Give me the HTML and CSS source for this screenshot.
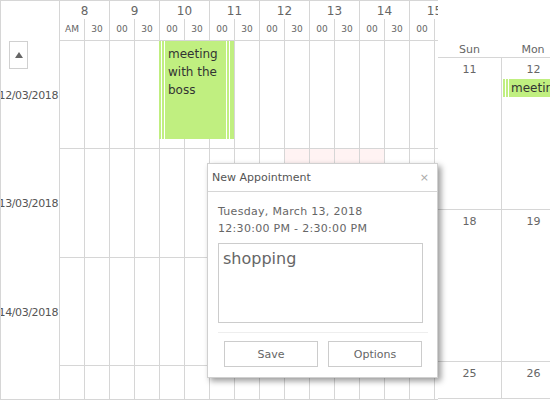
FILE: index.html
```html
<!DOCTYPE html>
<html>
<head>
<meta charset="utf-8">
<link rel="stylesheet" href="styles.css">
</head>
<body>
<div class="app">
  <div class="timeline">
    <div class="tl-grid">
      <div class="corner"></div>
      <div class="hour">8</div><div class="hour">9</div><div class="hour">10</div><div class="hour">11</div>
      <div class="hour">12</div><div class="hour">13</div><div class="hour">14</div><div class="hour">15</div>
      <div class="min">AM</div><div class="min">30</div><div class="min">00</div><div class="min">30</div>
      <div class="min">00</div><div class="min">30</div><div class="min">00</div><div class="min">30</div>
      <div class="min">00</div><div class="min">30</div><div class="min">00</div><div class="min">30</div>
      <div class="min">00</div><div class="min">30</div><div class="min">00</div><div class="min"></div>

      <div class="label"><span>12/03/2018</span></div>
      <div class="cell"></div><div class="cell"></div><div class="cell"></div><div class="cell"></div>
      <div class="cell"></div><div class="cell"></div><div class="cell"></div><div class="cell"></div>
      <div class="cell"></div><div class="cell"></div><div class="cell"></div><div class="cell"></div>
      <div class="cell"></div><div class="cell"></div><div class="cell"></div><div class="cell"></div>

      <div class="label"><span>13/03/2018</span></div>
      <div class="cell"></div><div class="cell"></div><div class="cell"></div><div class="cell"></div>
      <div class="cell"></div><div class="cell"></div><div class="cell"></div><div class="cell"></div>
      <div class="cell"></div><div class="cell sel"></div><div class="cell sel"></div><div class="cell sel"></div>
      <div class="cell sel"></div><div class="cell"></div><div class="cell"></div><div class="cell"></div>

      <div class="label"><span>14/03/2018</span></div>
      <div class="cell"></div><div class="cell"></div><div class="cell"></div><div class="cell"></div>
      <div class="cell"></div><div class="cell"></div><div class="cell"></div><div class="cell"></div>
      <div class="cell"></div><div class="cell"></div><div class="cell"></div><div class="cell"></div>
      <div class="cell"></div><div class="cell"></div><div class="cell"></div><div class="cell"></div>

      <div class="label"></div>
      <div class="cell end"></div><div class="cell end"></div><div class="cell end"></div><div class="cell end"></div>
      <div class="cell end"></div><div class="cell end"></div><div class="cell end"></div><div class="cell end"></div>
      <div class="cell end"></div><div class="cell end"></div><div class="cell end"></div><div class="cell end"></div>
      <div class="cell end"></div><div class="cell end"></div><div class="cell end"></div><div class="cell end"></div>
    </div>
    <div class="up-btn"><span class="tri"></span></div>
    <div class="appt">meeting with the boss</div>
  </div>

  <div class="month">
    <div class="dow-row"><div class="dow">Sun</div><div class="dow">Mon</div></div>
    <div class="week">
      <div class="day"><div class="num">11</div></div>
      <div class="day"><div class="num">12</div><div class="bar">meeting</div></div>
    </div>
    <div class="week">
      <div class="day"><div class="num">18</div></div>
      <div class="day"><div class="num">19</div></div>
    </div>
    <div class="week last">
      <div class="day"><div class="num">25</div></div>
      <div class="day"><div class="num">26</div></div>
    </div>
  </div>

  <div class="dialog">
    <div class="dlg-head"><span class="dlg-title">New Appointment</span><span class="close">×</span></div>
    <div class="dlg-body">
      <div class="when">Tuesday, March 13, 2018</div>
      <div class="when">12:30:00 PM - 2:30:00 PM</div>
      <div class="note">shopping</div>
      <div class="dlg-foot"><button class="btn">Save</button><button class="btn">Options</button></div>
    </div>
  </div>
</div>
</body>
</html>
```

FILE: styles.css
```css
* { box-sizing: border-box; }

body {
  margin: 0;
  background: #fff;
  color: #666;
  font-family: "DejaVu Sans", Verdana, sans-serif;
}

.app {
  position: relative;
  width: 550px;
  height: 400px;
  display: flex;
  overflow: hidden;
}

/* ---------- timeline ---------- */
.timeline {
  position: relative;
  flex: none;
  width: 438px;
  height: 400px;
  overflow: hidden;
  border-top: 1px solid #d6d6d6;
  border-bottom: 1px solid #d6d6d6;
}

.tl-grid {
  display: grid;
  grid-template-columns: 59px repeat(16, 25px);
  grid-template-rows: 18px 22px 108px 109px 108px 33px;
  width: 459px;
}

.corner {
  grid-row: span 2;
  border-left: 1px solid #d6d6d6;
}

.hour {
  grid-column: span 2;
  border-left: 1px solid #d6d6d6;
  text-align: center;
  font-size: 12px;
  line-height: 20px;
  color: #666;
  white-space: nowrap;
}

.min {
  border-left: 1px solid #d6d6d6;
  border-bottom: 1px solid #d6d6d6;
  text-align: center;
  font-size: 9px;
  line-height: 20px;
  color: #666;
}

.label {
  border-left: 1px solid #d6d6d6;
  display: flex;
  align-items: center;
  justify-content: flex-end;
  overflow: hidden;
  white-space: nowrap;
  font-size: 11px;
  letter-spacing: -0.4px;
  color: #555;
  padding-right: 1px;
}

.cell {
  border-left: 1px solid #d6d6d6;
  border-bottom: 1px solid #d6d6d6;
}
.cell.end { border-bottom: none; }
.cell.sel { background: #fff3f3; }

.up-btn {
  position: absolute;
  left: 9px;
  top: 40px;
  width: 19px;
  height: 28px;
  border: 1px solid #d0d0d0;
  display: flex;
  align-items: center;
  justify-content: center;
}
.tri {
  width: 0;
  height: 0;
  border-left: 4px solid transparent;
  border-right: 4px solid transparent;
  border-bottom: 6px solid #666;
}

.appt {
  position: absolute;
  left: 159px;
  top: 40px;
  width: 75px;
  height: 98px;
  padding: 4px 6px 0 9px;
  font-size: 12px;
  line-height: 18px;
  color: #333;
  background:
    linear-gradient(to right,
      transparent 0 2px, #fff 2px 3px, transparent 3px 5px, #fff 5px 6px,
      transparent 6px calc(100% - 8px), #fff calc(100% - 8px) calc(100% - 7px),
      transparent calc(100% - 7px) calc(100% - 5px), #fff calc(100% - 5px) calc(100% - 4px),
      transparent calc(100% - 4px)),
    #c0ef80;
}

/* ---------- month ---------- */
.month {
  flex: 1;
  display: flex;
  flex-direction: column;
  padding-top: 41px;
  overflow: hidden;
}

.dow-row {
  display: grid;
  grid-template-columns: 63px 64px;
  height: 17px;
  padding-top: 2px;
  border-bottom: 1px solid #d6d6d6;
}
.dow {
  text-align: center;
  font-size: 11px;
  line-height: 14px;
  color: #666;
}

.week {
  display: grid;
  grid-template-columns: 63px 64px;
  height: 152px;
  border-bottom: 1px solid #d6d6d6;
}
.week.last { height: 37px; }

.day {
  min-width: 0;
  overflow: hidden;
}
.day + .day { border-left: 1px solid #d6d6d6; }

.num {
  text-align: center;
  font-size: 11px;
  line-height: 14px;
  padding-top: 5px;
  height: 21px;
  color: #666;
}

.bar {
  margin-left: 1px;
  height: 18px;
  padding-left: 8px;
  font-size: 12px;
  line-height: 18px;
  color: #333;
  white-space: nowrap;
  background:
    linear-gradient(to right,
      transparent 0 2px, #fff 2px 3px, transparent 3px 5px, #fff 5px 6px, transparent 6px),
    #c0ef80;
}

/* ---------- dialog ---------- */
.dialog {
  position: absolute;
  left: 207px;
  top: 163px;
  width: 231px;
  height: 215px;
  background: #fff;
  border: 1px solid #d0d0d0;
  box-shadow: 3px 3px 6px rgba(0, 0, 0, 0.4);
}

.dlg-head {
  display: flex;
  justify-content: space-between;
  align-items: center;
  height: 28px;
  padding: 0 8px 0 4px;
  border-bottom: 1px solid #d6d6d6;
  font-size: 11px;
}
.dlg-title { color: #555; }
.close { color: #aaa; font-size: 11px; }

.dlg-body {
  padding: 11px 9px 10px 10px;
}

.when {
  font-size: 11px;
  line-height: 17px;
  letter-spacing: 0.3px;
  color: #666;
}

.note {
  margin-top: 6px;
  width: 205px;
  height: 80px;
  border: 1px solid #ccc;
  padding: 5px 4px;
  font-size: 16px;
  line-height: 19px;
  color: #666;
}

.dlg-foot {
  margin-top: 9px;
  border-top: 1px solid #eee;
  padding-top: 8px;
  display: flex;
  justify-content: center;
  gap: 10px;
}

.btn {
  width: 94px;
  height: 26px;
  border: 1px solid #ccc;
  background: #fff;
  font-family: "DejaVu Sans", Verdana, sans-serif;
  font-size: 11px;
  color: #666;
  padding: 0;
}
```
